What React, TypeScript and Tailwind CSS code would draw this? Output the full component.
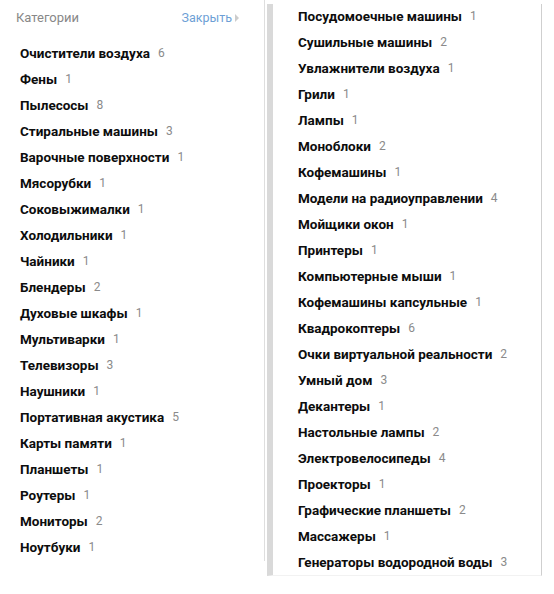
import React from 'react';

type Category = { name: string; count: number };

const leftItems: Category[] = [
  { name: 'Очистители воздуха', count: 6 },
  { name: 'Фены', count: 1 },
  { name: 'Пылесосы', count: 8 },
  { name: 'Стиральные машины', count: 3 },
  { name: 'Варочные поверхности', count: 1 },
  { name: 'Мясорубки', count: 1 },
  { name: 'Соковыжималки', count: 1 },
  { name: 'Холодильники', count: 1 },
  { name: 'Чайники', count: 1 },
  { name: 'Блендеры', count: 2 },
  { name: 'Духовые шкафы', count: 1 },
  { name: 'Мультиварки', count: 1 },
  { name: 'Телевизоры', count: 3 },
  { name: 'Наушники', count: 1 },
  { name: 'Портативная акустика', count: 5 },
  { name: 'Карты памяти', count: 1 },
  { name: 'Планшеты', count: 1 },
  { name: 'Роутеры', count: 1 },
  { name: 'Мониторы', count: 2 },
  { name: 'Ноутбуки', count: 1 },
];

const rightItems: Category[] = [
  { name: 'Посудомоечные машины', count: 1 },
  { name: 'Сушильные машины', count: 2 },
  { name: 'Увлажнители воздуха', count: 1 },
  { name: 'Грили', count: 1 },
  { name: 'Лампы', count: 1 },
  { name: 'Моноблоки', count: 2 },
  { name: 'Кофемашины', count: 1 },
  { name: 'Модели на радиоуправлении', count: 4 },
  { name: 'Мойщики окон', count: 1 },
  { name: 'Принтеры', count: 1 },
  { name: 'Компьютерные мыши', count: 1 },
  { name: 'Кофемашины капсульные', count: 1 },
  { name: 'Квадрокоптеры', count: 6 },
  { name: 'Очки виртуальной реальности', count: 2 },
  { name: 'Умный дом', count: 3 },
  { name: 'Декантеры', count: 1 },
  { name: 'Настольные лампы', count: 2 },
  { name: 'Электровелосипеды', count: 4 },
  { name: 'Проекторы', count: 1 },
  { name: 'Графические планшеты', count: 2 },
  { name: 'Массажеры', count: 1 },
  { name: 'Генераторы водородной воды', count: 3 },
];

function Row({ item }: { item: Category }) {
  return (
    <li className="flex h-[26px] items-center">
      <a href="#" className="text-[13.5px] font-bold text-[#0d0d0d]">
        {item.name}
      </a>
      <span className="ml-2 text-[12px] text-[#8a8a8a]">{item.count}</span>
    </li>
  );
}

export default function App() {
  return (
    <div
      className="flex w-[554px] items-start bg-white"
      style={{ fontFamily: 'Roboto, "Liberation Sans", sans-serif' }}
    >
      {/* left column */}
      <div className="w-[265px] shrink-0 border-r border-[#dedede] pb-px">
        <div className="mt-2 flex h-5 items-center justify-between pl-4 pr-[25px]">
          <span className="text-[13px] text-[#888]">Категории</span>
          <button className="flex items-center gap-[3px] text-[12.5px] text-[#6d9fd6]">
            Закрыть
            <span className="h-0 w-0 border-y-[4px] border-l-[4px] border-y-transparent border-l-[#ccc]" />
          </button>
        </div>
        <ul className="mt-3 pl-5">
          {leftItems.map((c) => (
            <Row key={c.name} item={c} />
          ))}
        </ul>
      </div>

      {/* right panel */}
      <div className="ml-[2px] mt-1 w-[275px] shrink-0 border-l-[6px] border-r border-b border-l-[#d9d9d9] border-r-[#cfcfcf] border-b-[#f2f2f2] pl-[25px]">
        <ul className="-mt-px">
          {rightItems.map((c) => (
            <Row key={c.name} item={c} />
          ))}
        </ul>
      </div>
    </div>
  );
}
